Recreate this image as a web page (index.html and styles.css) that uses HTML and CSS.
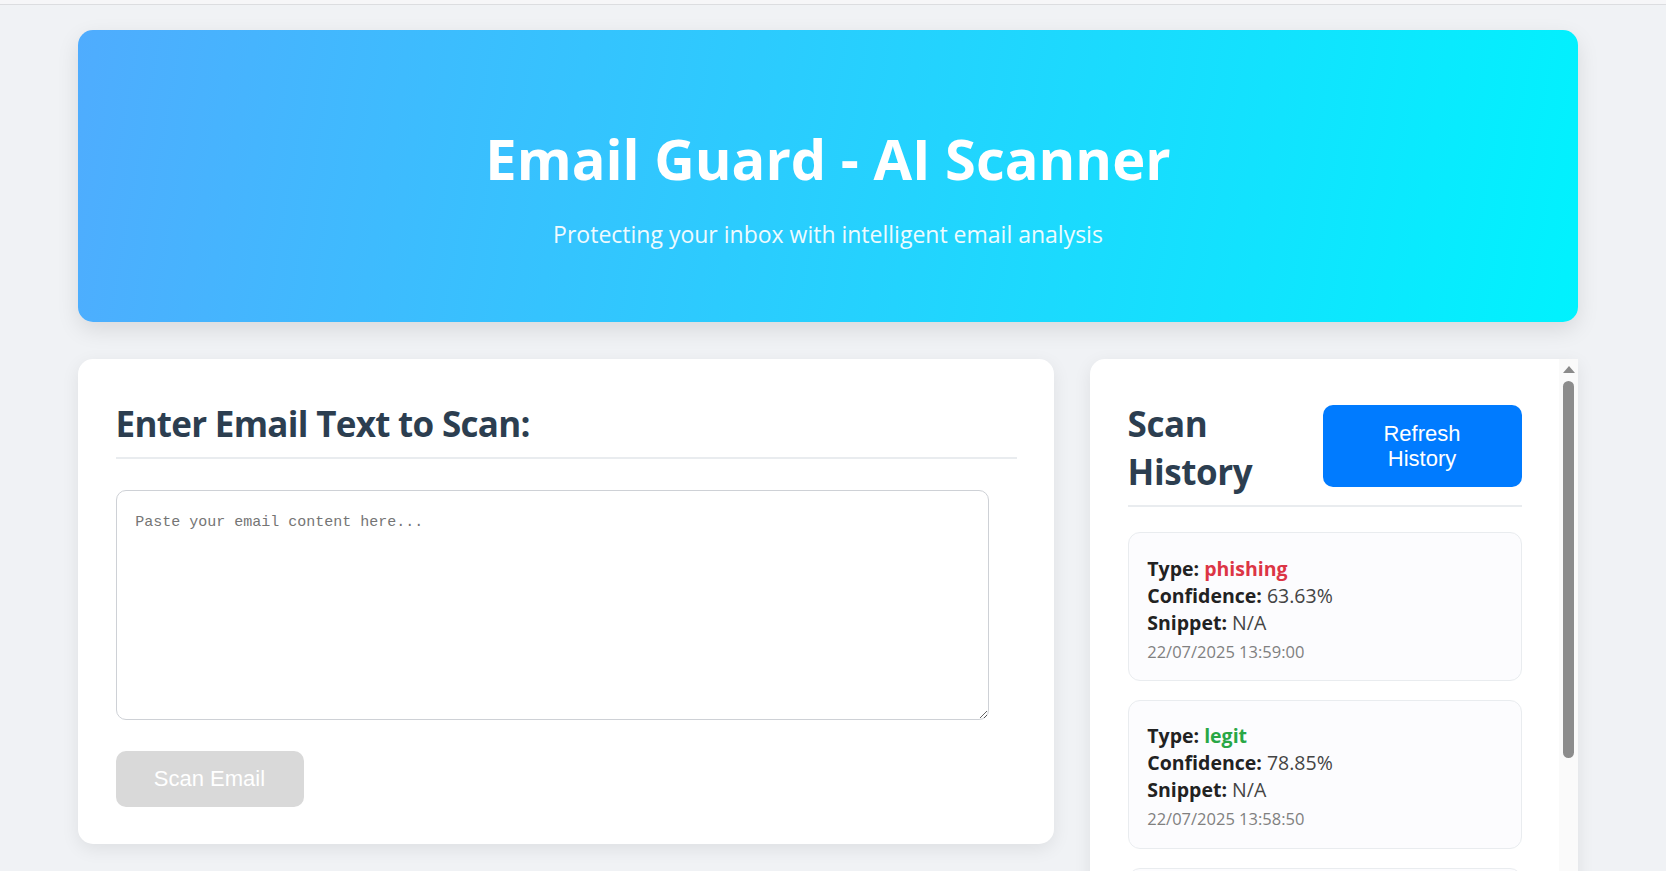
FILE: index.html
```html
<!DOCTYPE html>
<html lang="en">
<head>
<meta charset="utf-8">
<title>Email Guard - AI Scanner</title>
<link rel="stylesheet" href="styles.css">
</head>
<body>
<div class="topbar"></div>
<div class="container">
  <header class="hero">
    <h1 class="hero-title">Email Guard - AI Scanner</h1>
    <p class="hero-sub">Protecting your inbox with intelligent email analysis</p>
  </header>
  <main class="grid">
    <section class="card scan-card">
      <h2 class="card-title">Enter Email Text to Scan:</h2>
      <textarea class="email-input" placeholder="Paste your email content here..."></textarea>
      <button class="scan-btn" disabled>Scan Email</button>
    </section>
    <section class="card history-card">
      <div class="history-body">
        <div class="history-head">
          <h2 class="history-title">Scan History</h2>
          <button class="refresh-btn">Refresh History</button>
        </div>
        <div class="history-list">
          <div class="history-item">
            <div class="row"><span class="label">Type:</span> <span class="type phishing">phishing</span></div>
            <div class="row"><span class="label">Confidence:</span> <span class="value">63.63%</span></div>
            <div class="row"><span class="label">Snippet:</span> <span class="value">N/A</span></div>
            <div class="date">22/07/2025 13:59:00</div>
          </div>
          <div class="history-item">
            <div class="row"><span class="label">Type:</span> <span class="type legit">legit</span></div>
            <div class="row"><span class="label">Confidence:</span> <span class="value">78.85%</span></div>
            <div class="row"><span class="label">Snippet:</span> <span class="value">N/A</span></div>
            <div class="date">22/07/2025 13:58:50</div>
          </div>
          <div class="history-item">
            <div class="row"><span class="label">Type:</span> <span class="type phishing">phishing</span></div>
            <div class="row"><span class="label">Confidence:</span> <span class="value">91.20%</span></div>
            <div class="row"><span class="label">Snippet:</span> <span class="value">N/A</span></div>
            <div class="date">22/07/2025 13:58:31</div>
          </div>
        </div>
      </div>
      <div class="scrollbar" aria-hidden="true">
        <div class="scroll-arrow"></div>
        <div class="scroll-thumb"></div>
      </div>
    </section>
  </main>
</div>
</body>
</html>
```
FILE: styles.css
```css
html {
  overflow: hidden;
}
body {
  margin: 0;
  background: #f0f2f5;
  font-family: "Open Sans", "Noto Sans", sans-serif;
  color: #333;
}
.topbar {
  height: 4px;
  background: #f6f6f8;
  border-bottom: 1px solid #dcdde0;
}
.container {
  width: 1500px;
  margin: 25px 0 0 78px;
}
.hero {
  height: 292px;
  box-sizing: border-box;
  padding: 90px 20px 0;
  border-radius: 15px;
  background: linear-gradient(100deg, #4facfe 0%, #00f2fe 100%);
  color: #fff;
  text-align: center;
  box-shadow: 0 8px 22px rgba(0, 0, 0, 0.1);
}
.hero-title {
  margin: 0 0 22px;
  font-size: 56px;
  line-height: 76px;
  font-weight: 700;
}
.hero-sub {
  margin: 0;
  font-size: 23px;
  line-height: 33px;
  opacity: 0.92;
}
.grid {
  margin-top: 37px;
  display: grid;
  grid-template-columns: 976px 488px;
  column-gap: 36px;
  align-items: start;
}
.card {
  background: #fff;
  border-radius: 15px;
  box-shadow: 0 5px 18px rgba(0, 0, 0, 0.08);
  box-sizing: border-box;
}
.scan-card {
  padding: 41px 37.5px 36.5px;
}
.card-title {
  margin: 0 0 31px;
  padding-bottom: 9px;
  border-bottom: 2.5px solid #e9ecef;
  font-size: 35px;
  letter-spacing: -0.7px;
  line-height: 48px;
  font-weight: 700;
  color: #2c3e50;
}
.email-input {
  display: block;
  width: 97%;
  height: 230px;
  box-sizing: border-box;
  padding: 22px 18.75px 18.75px;
  border: 1px solid #ced1d6;
  border-radius: 10px;
  font-family: "Liberation Mono", monospace;
  font-size: 15px;
  line-height: 20px;
  color: #333;
  resize: vertical;
}
.email-input::placeholder {
  color: #757575;
}
.scan-btn {
  display: block;
  margin-top: 31px;
  width: 188px;
  height: 56px;
  border: none;
  border-radius: 10px;
  background: #d9d9d9;
  color: #fff;
  font-family: "Liberation Sans", Arial, sans-serif;
  font-size: 22px;
}
.history-card {
  height: 590px;
  display: flex;
  overflow: hidden;
  border-radius: 15px 0 0 15px;
}
.history-body {
  flex: 1;
  min-width: 0;
  padding: 41px 37.5px 37.5px;
}
.scrollbar {
  width: 19px;
  flex-shrink: 0;
  background: #fafafa;
  display: flex;
  flex-direction: column;
  align-items: center;
}
.scroll-arrow {
  margin-top: 7px;
  width: 0;
  height: 0;
  border-left: 6.5px solid transparent;
  border-right: 6.5px solid transparent;
  border-bottom: 7px solid #8a8a8a;
}
.scroll-thumb {
  margin-top: 8px;
  width: 11px;
  height: 377px;
  border-radius: 6px;
  background: #8c8c8c;
}
.history-head {
  display: flex;
  justify-content: space-between;
  align-items: center;
  padding-bottom: 9px;
  border-bottom: 2.5px solid #e9ecef;
  margin-bottom: 25px;
}
.history-title {
  margin: 0;
  font-size: 35px;
  letter-spacing: -0.4px;
  line-height: 48px;
  font-weight: 700;
  color: #2c3e50;
}
.refresh-btn {
  flex-shrink: 0;
  width: 199px;
  height: 82px;
  margin-bottom: 4px;
  border: none;
  border-radius: 10px;
  background: #007bff;
  color: #fff;
  font-family: "Liberation Sans", Arial, sans-serif;
  font-size: 22px;
  line-height: 25.5px;
  padding: 0 40px;
}
.history-list {
  display: flex;
  flex-direction: column;
  gap: 18.75px;
}
.history-item {
  border: 1px solid #e9ecef;
  border-radius: 12px;
  background: #fcfcfe;
  padding: 21.5px 18.75px 17.5px;
  font-size: 19.5px;
  line-height: 27px;
}
.label {
  font-weight: 700;
  color: #222;
}
.value {
  color: #444;
}
.type {
  font-weight: 700;
}
.phishing {
  color: #dc3545;
}
.legit {
  color: #28a745;
}
.date {
  margin-top: 4px;
  font-size: 16.5px;
  line-height: 23px;
  color: #808080;
}
```
